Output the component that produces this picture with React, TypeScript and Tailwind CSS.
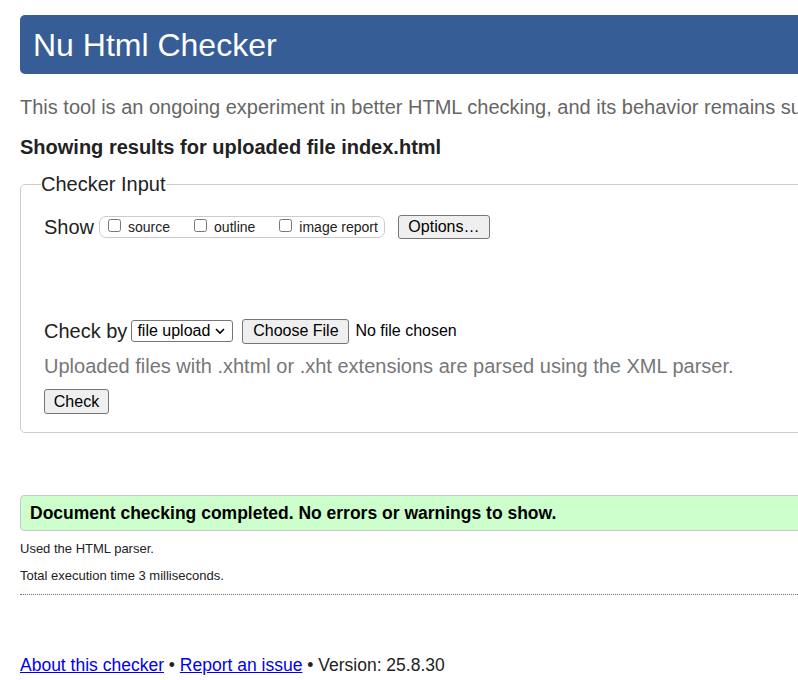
import { useState } from "react";

function ChevronDown() {
  return (
    <svg width="12" height="12" viewBox="0 0 12 12" className="ml-[4px]">
      <path d="M2 4 L6 8 L10 4" fill="none" stroke="#000" strokeWidth="1.6" />
    </svg>
  );
}

function ShowOption({ label }: { label: string }) {
  const [checked, setChecked] = useState(false);
  return (
    <label className="flex items-center mr-[24px] last:mr-0 text-[14px] leading-[16px]">
      <input
        type="checkbox"
        checked={checked}
        onChange={() => setChecked(!checked)}
        className="w-[13px] h-[13px] mr-[7px] -mt-[4px]"
      />
      {label}
    </label>
  );
}

function GrayButton({ children, className = "" }: { children: React.ReactNode; className?: string }) {
  return (
    <button
      className={`inline-flex items-center justify-center bg-[#efefef] border border-[#767676] rounded-[3px] text-[16px] leading-[18px] text-black ${className}`}
    >
      {children}
    </button>
  );
}

export default function App() {
  return (
    <div
      className="w-[798px] h-[680px] overflow-hidden bg-white text-[#222]"
      style={{ fontFamily: '"Liberation Sans", Arial, sans-serif' }}
    >
      <div className="w-[1100px] pl-[20px] pt-[15px]">
        {/* Header */}
        <h1 className="h-[59px] flex items-center pl-[13px] bg-[#365d95] rounded-[5px] text-white text-[32px] leading-[36px] font-normal">
          Nu Html Checker
        </h1>

        <p className="mt-[21px] text-[20px] leading-[24px] text-[#666] whitespace-nowrap">
          This tool is an ongoing experiment in better HTML checking, and its behavior remains subject to change
        </p>

        <h2 className="mt-[16px] text-[20px] leading-[24px] font-bold text-[#222]">
          Showing results for uploaded file index.html
        </h2>

        {/* Checker input */}
        <fieldset className="mt-[13px] border border-[#ccc] rounded-[5px] pl-[23px] pb-[18px]">
          <legend className="-ml-[3px] text-[20px] leading-[24px] text-[#222]">Checker Input</legend>

          <div className="mt-[18px] h-[26px] flex items-center">
            <span className="text-[20px] leading-[24px]">Show</span>
            <fieldset className="ml-[5px] h-[22px] flex items-center border border-[#ccc] rounded-[7px] pl-[8px] pr-[6px]">
              <ShowOption label="source" />
              <ShowOption label="outline" />
              <ShowOption label="image report" />
            </fieldset>
            <GrayButton className="ml-[13px] h-[24px] w-[92px]">Options…</GrayButton>
          </div>

          <div className="mt-[78px] h-[26px] flex items-center">
            <span className="text-[20px] leading-[24px]">Check by</span>
            <div className="ml-[4px] h-[22px] w-[102px] flex items-center border border-[#767676] rounded-[3px] pl-[5px] text-[16px] leading-[18px] text-black">
              file upload
              <ChevronDown />
            </div>
            <GrayButton className="ml-[9px] h-[25px] w-[107px]">Choose File</GrayButton>
            <span className="ml-[6px] text-[16px] leading-[18px] text-black">No file chosen</span>
          </div>

          <p className="mt-[10px] text-[20px] leading-[24px] text-[#777]">
            Uploaded files with .xhtml or .xht extensions are parsed using the XML parser.
          </p>

          <GrayButton className="mt-[11px] h-[25px] w-[65px]">Check</GrayButton>
        </fieldset>

        {/* Result */}
        <div className="mt-[62px] h-[36px] flex items-center pl-[9px] bg-[#ccffcc] border border-[#c8c8c8] rounded-[4px]">
          <span className="text-[17.5px] leading-[20px] font-bold text-black">
            Document checking completed. No errors or warnings to show.
          </span>
        </div>

        <p className="mt-[10px] text-[13px] leading-[16px] text-[#222]">Used the HTML parser.</p>
        <p className="mt-[11px] text-[13px] leading-[16px] text-[#222]">Total execution time 3 milliseconds.</p>

        <hr className="mt-[10px] border-0 border-t border-dotted border-[#777]" />

        {/* Footer */}
        <p className="mt-[60px] text-[17.5px] leading-[21px] text-[#222]">
          <a href="#" className="text-[#0000ee] underline">
            About this checker
          </a>
          {" • "}
          <a href="#" className="text-[#0000ee] underline">
            Report an issue
          </a>
          {" • Version: 25.8.30"}
        </p>
      </div>
    </div>
  );
}
